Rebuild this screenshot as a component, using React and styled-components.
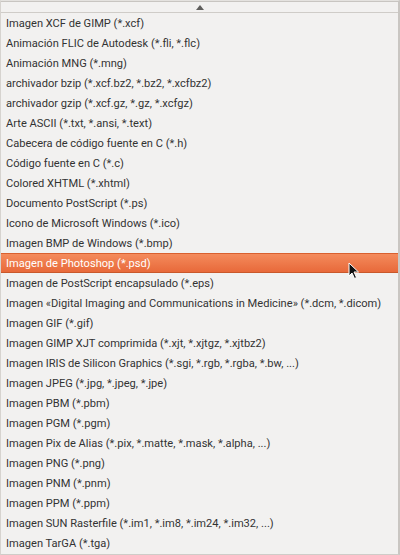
import React from "react";
import styled, { createGlobalStyle } from "styled-components";

const Global = createGlobalStyle`
  html, body { margin: 0; padding: 0; background: #f2f1f0; }
  body { width: 400px; height: 555px; overflow: hidden; }
`;

const Menu = styled.div`
  position: relative;
  box-sizing: border-box;
  width: 400px;
  height: 555px;
  background: #f2f1f0;
  border-left: 1px solid #d6d3cf;
  border-right: 2px solid #c9c6c2;
  border-top: 1px solid #e4e2df;
  border-bottom: 1px solid #cfccc8;
  font-family: Roboto, "Liberation Sans", sans-serif;
  overflow: hidden;
`;

const ScrollArrow = styled.div`
  height: 10px;
  border-top: 1px solid #c8c5c1;
  border-bottom: 1px solid #cfccc8;
  display: flex;
  align-items: center;
  justify-content: center;
`;

const List = styled.div`
  display: flex;
  flex-direction: column;
`;

const Item = styled.div`
  box-sizing: border-box;
  height: 20px;
  padding-left: 5px;
  display: flex;
  align-items: center;
  font-size: 11.1px;
  white-space: nowrap;
  color: ${(p) => (p.$active ? "#ffffff" : "#333333")};
  background: ${(p) =>
    p.$active ? "linear-gradient(#f48b5c, #e8693a)" : "transparent"};
  border-top: 1px solid ${(p) => (p.$active ? "#d9602f" : "transparent")};
  border-bottom: 1px solid ${(p) => (p.$active ? "#c9582b" : "transparent")};
`;

const Cursor = styled.svg`
  position: absolute;
  left: 347px;
  top: 261px;
`;

const Corner = styled.div`
  position: absolute;
  right: -2px;
  bottom: 0;
  width: 2px;
  height: 15px;
  background: #4a4a4a;
`;

const items = [
  "Imagen XCF de GIMP (*.xcf)",
  "Animación FLIC de Autodesk (*.fli, *.flc)",
  "Animación MNG (*.mng)",
  "archivador bzip (*.xcf.bz2, *.bz2, *.xcfbz2)",
  "archivador gzip (*.xcf.gz, *.gz, *.xcfgz)",
  "Arte ASCII (*.txt, *.ansi, *.text)",
  "Cabecera de código fuente en C (*.h)",
  "Código fuente en C (*.c)",
  "Colored XHTML (*.xhtml)",
  "Documento PostScript (*.ps)",
  "Icono de Microsoft Windows (*.ico)",
  "Imagen BMP de Windows (*.bmp)",
  "Imagen de Photoshop (*.psd)",
  "Imagen de PostScript encapsulado (*.eps)",
  "Imagen «Digital Imaging and Communications in Medicine» (*.dcm, *.dicom)",
  "Imagen GIF (*.gif)",
  "Imagen GIMP XJT comprimida (*.xjt, *.xjtgz, *.xjtbz2)",
  "Imagen IRIS de Silicon Graphics (*.sgi, *.rgb, *.rgba, *.bw, ...)",
  "Imagen JPEG (*.jpg, *.jpeg, *.jpe)",
  "Imagen PBM (*.pbm)",
  "Imagen PGM (*.pgm)",
  "Imagen Pix de Alias (*.pix, *.matte, *.mask, *.alpha, ...)",
  "Imagen PNG (*.png)",
  "Imagen PNM (*.pnm)",
  "Imagen PPM (*.ppm)",
  "Imagen SUN Rasterfile (*.im1, *.im8, *.im24, *.im32, ...)",
  "Imagen TarGA (*.tga)",
];

export default function App() {
  return (
    <>
      <Global />
      <Menu>
        <ScrollArrow>
          <svg width="8" height="5" viewBox="0 0 8 5">
            <path d="M4 0 L8 5 L0 5 Z" fill="#5f5e5c" />
          </svg>
        </ScrollArrow>
        <List>
          {items.map((t, i) => (
            <Item key={i} $active={i === 12}>
              {t}
            </Item>
          ))}
        </List>
        <Cursor width="12" height="18" viewBox="0 0 12 18">
          <path
            d="M1 1 L1 14 L4 11 L6.5 16.5 L8.5 15.5 L6 10 L10.5 10 Z"
            fill="#111"
            stroke="#fff"
            strokeWidth="1"
            strokeLinejoin="round"
          />
        </Cursor>
        <Corner />
      </Menu>
    </>
  );
}
